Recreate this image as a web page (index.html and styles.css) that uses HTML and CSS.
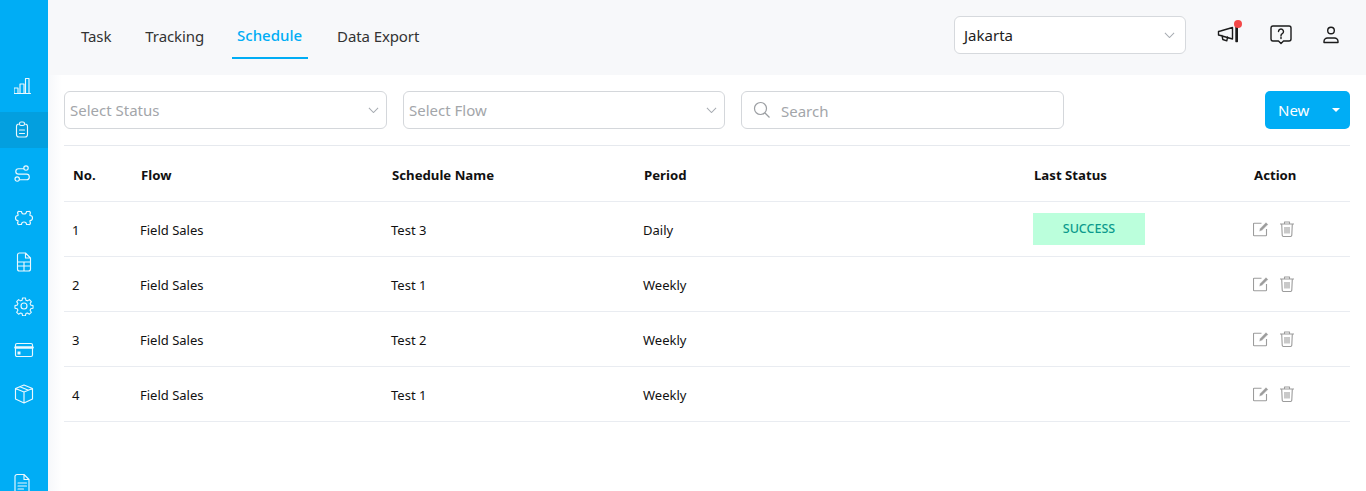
FILE: index.html
```html
<!DOCTYPE html>
<html lang="en">
<head>
<meta charset="utf-8">
<title>Schedule</title>
<link rel="stylesheet" href="styles.css">
</head>
<body>
<div class="app">
  <aside class="sidebar">
    <a class="side-item"><svg class="side-icon" viewBox="1 0 20 20"><path d="M0.500 17.500h17M1 17v-5h4v5M7 17V8h4v9M12.500 17V2.500h3.500V17"/></svg></a>
    <a class="side-item active"><svg class="side-icon" viewBox="0 0 20 20"><path d="M5.500 4H5a2.500 2.500 0 0 0-2.500 2.500v8A2.500 2.500 0 0 0 5 17h6a2.500 2.500 0 0 0 2.500-2.500v-8A2.500 2.500 0 0 0 11 4h-.5M5.500 3.500A1.500 1.500 0 0 1 7 2h2a1.500 1.500 0 0 1 1.500 1.500V4A1.500 1.500 0 0 1 9 5.500H7A1.500 1.500 0 0 1 5.500 4zM5.500 10h5M5.500 13.500h5"/></svg></a>
    <a class="side-item"><svg class="side-icon" viewBox="0 0 20 20"><circle cx="12" cy="4" r="2.200"/><circle cx="3.200" cy="15" r="2.200"/><path d="M9.500 4.700H4.500a2.700 2.700 0 0 0 0 5.400H12.500a2.800 2.800 0 0 1 0 5.600H6"/></svg></a>
    <a class="side-item"><svg class="side-icon" viewBox="0 0 20 20"><path d="M4 6a1.500 1.500 0 0 1 1.500-2.500H7.500a2 2 0 0 0 5 0H14.500a1.500 1.500 0 0 1 1.500 2.500V7.500a2.500 2.500 0 0 1 0 5V14a1.500 1.500 0 0 1-1.500 2.500H12.500a2 2 0 0 0-5 0H5.500A1.500 1.500 0 0 1 4 14V12.500a2.500 2.500 0 0 1 0-5z"/></svg></a>
    <a class="side-item"><svg class="side-icon" viewBox="0 0 20 20"><path d="M3.500 3a2 2 0 0 1 2-2H11.500l5 5V17a2 2 0 0 1-2 2h-9a2 2 0 0 1-2-2zM11.500 1V6h5M3.500 10h13M3.500 14h13M10 10v9"/></svg></a>
    <a class="side-item"><svg class="side-icon" viewBox="0 0 20 20"><circle cx="10" cy="10" r="3"/><path d="M8.500 1.500h3l.5 2.400 1.600.7 2.100-1.300 2 2.100-1.300 2.100.7 1.600 2.400.4v2.900l-2.400.5-.7 1.600 1.300 2.100-2 2-2.100-1.300-1.600.7-.5 2.400h-3l-.5-2.400-1.600-.7-2.100 1.300-2-2 1.300-2.100-.7-1.600-2.400-.5v-2.900l2.400-.4.7-1.600-1.300-2.100 2-2.100 2.100 1.300 1.600-.7z" transform="translate(.5 .5) scale(.95)"/></svg></a>
    <a class="side-item"><svg class="side-icon" viewBox="0 0 20 20"><rect x="1.500" y="3.500" width="17" height="13" rx="1.500"/><path class="thick" d="M1.500 7.500h17"/><rect class="solid" x="3.500" y="11.500" width="3" height="3"/></svg></a>
    <a class="side-item"><svg class="side-icon" viewBox="0 0 20 20"><path d="M10 1l8.500 3.500V15L10 19l-8.500-4V4.500zM1.500 4.500L10 8l8.500-3.500M10 8v11M6 2.700l8.500 3.500"/></svg></a>
    <a class="side-item last"><svg class="side-icon" viewBox="0 0 20 20"><path d="M1 3.500a2 2 0 0 1 2-2H10l5 5V18a2 2 0 0 1-2 2H3a2 2 0 0 1-2-2zM10 1.500V6.500h5M4 10h8.500M4 13h8.500M4 16h5.500"/></svg></a>
  </aside>
  <main class="main">
    <header class="topbar">
      <nav class="tabs">
        <a class="tab">Task</a>
        <a class="tab">Tracking</a>
        <a class="tab current">Schedule</a>
        <a class="tab">Data Export</a>
      </nav>
      <div class="top-right">
        <div class="city"><span>Jakarta</span><svg class="chevron" viewBox="0 0 12 7"><path d="M1 1l5 5 5-5"/></svg></div>
        <a class="top-icon bell">
          <svg viewBox="0 0 24 24"><path d="M1.500 8.500l2-.5 12-3.500v11.500l-12-3.500-2-.5zM5 12.500l.8 4 4 1.300.7-3.800M19 2.500h1.300V18.500H19z"/></svg>
          <span class="dot"></span>
        </a>
        <a class="top-icon help"><svg viewBox="0 0 24 24"><path d="M4 3h16a2 2 0 0 1 2 2v11a2 2 0 0 1-2 2h-5.500L12 20.500 9.500 18H4a2 2 0 0 1-2-2V5a2 2 0 0 1 2-2z"/><path d="M9.500 8.500a2.500 2.500 0 1 1 3.800 2.200c-.9.500-1.300 1-1.300 2M12 14.200v1.300"/></svg></a>
        <a class="top-icon"><svg viewBox="0 0 24 24"><circle cx="12" cy="7.500" r="3.300"/><path d="M5 19.500v-1a3.500 3.500 0 0 1 3.500-3.500h7a3.500 3.500 0 0 1 3.500 3.500v1z"/></svg></a>
      </div>
    </header>
    <section class="content">
      <div class="filters">
        <div class="select"><span>Select Status</span><svg class="chevron" viewBox="0 0 12 7"><path d="M1 1l5 5 5-5"/></svg></div>
        <div class="select"><span>Select Flow</span><svg class="chevron" viewBox="0 0 12 7"><path d="M1 1l5 5 5-5"/></svg></div>
        <div class="search">
          <svg class="search-icon" viewBox="0 0 18 18"><circle cx="7.500" cy="7.500" r="6"/><path d="M12 12l4.500 4.500"/></svg>
          <span class="search-text">Search</span>
        </div>
        <button class="new-btn"><span>New</span><i class="caret"></i></button>
      </div>
      <table class="grid">
        <colgroup>
          <col class="c-no"><col class="c-flow"><col class="c-name"><col class="c-period"><col class="c-status"><col class="c-action">
        </colgroup>
        <thead>
          <tr><th>No.</th><th>Flow</th><th>Schedule Name</th><th>Period</th><th>Last Status</th><th>Action</th></tr>
        </thead>
        <tbody>
          <tr><td>1</td><td>Field Sales</td><td>Test 3</td><td>Daily</td><td><span class="badge">SUCCESS</span></td>
            <td><div class="actions"><svg viewBox="0 0 16 16"><path d="M13.500 8v6a.7.700 0 0 1-.7.700H1.200a.7.700 0 0 1-.7-.7V3a.7.700 0 0 1 .7-.7h7.300"/><path class="fill" d="M6 10.500l.7-2.800L13 1.200l2.200 2.200-6.400 6.400z"/></svg><svg viewBox="0 0 16 16"><path d="M1 3h14M5.500 3V1h5v2M2.700 3l.5 11a1.500 1.500 0 0 0 1.500 1.500h6.600a1.500 1.500 0 0 0 1.500-1.500l.5-11M6 6v6.500M8 6v6.500M10 6v6.500"/></svg></div></td></tr>
          <tr><td>2</td><td>Field Sales</td><td>Test 1</td><td>Weekly</td><td></td>
            <td><div class="actions"><svg viewBox="0 0 16 16"><path d="M13.500 8v6a.7.700 0 0 1-.7.700H1.200a.7.700 0 0 1-.7-.7V3a.7.700 0 0 1 .7-.7h7.300"/><path class="fill" d="M6 10.500l.7-2.800L13 1.200l2.200 2.200-6.400 6.400z"/></svg><svg viewBox="0 0 16 16"><path d="M1 3h14M5.500 3V1h5v2M2.700 3l.5 11a1.500 1.500 0 0 0 1.500 1.500h6.600a1.500 1.500 0 0 0 1.500-1.500l.5-11M6 6v6.500M8 6v6.500M10 6v6.500"/></svg></div></td></tr>
          <tr><td>3</td><td>Field Sales</td><td>Test 2</td><td>Weekly</td><td></td>
            <td><div class="actions"><svg viewBox="0 0 16 16"><path d="M13.500 8v6a.7.700 0 0 1-.7.700H1.200a.7.700 0 0 1-.7-.7V3a.7.700 0 0 1 .7-.7h7.300"/><path class="fill" d="M6 10.500l.7-2.800L13 1.200l2.200 2.200-6.400 6.400z"/></svg><svg viewBox="0 0 16 16"><path d="M1 3h14M5.500 3V1h5v2M2.700 3l.5 11a1.500 1.500 0 0 0 1.500 1.500h6.600a1.500 1.500 0 0 0 1.500-1.500l.5-11M6 6v6.500M8 6v6.500M10 6v6.500"/></svg></div></td></tr>
          <tr><td>4</td><td>Field Sales</td><td>Test 1</td><td>Weekly</td><td></td>
            <td><div class="actions"><svg viewBox="0 0 16 16"><path d="M13.500 8v6a.7.700 0 0 1-.7.700H1.200a.7.700 0 0 1-.7-.7V3a.7.700 0 0 1 .7-.7h7.300"/><path class="fill" d="M6 10.500l.7-2.800L13 1.200l2.200 2.200-6.400 6.400z"/></svg><svg viewBox="0 0 16 16"><path d="M1 3h14M5.500 3V1h5v2M2.700 3l.5 11a1.500 1.500 0 0 0 1.500 1.500h6.600a1.500 1.500 0 0 0 1.500-1.500l.5-11M6 6v6.500M8 6v6.500M10 6v6.500"/></svg></div></td></tr>
        </tbody>
      </table>
    </section>
  </main>
</div>
</body>
</html>
```
FILE: styles.css
```css
* { box-sizing: border-box; }
html, body { margin: 0; height: 100%; overflow: hidden; }
body { font-family: "Noto Sans", "Open Sans", sans-serif; color: #111; background: #fff; }
.app { display: flex; height: 491px; overflow: hidden; }

.sidebar { width: 48px; flex: none; background: #00adf5; display: flex; flex-direction: column; gap: 8px; padding-top: 68px; overflow: hidden; }
.side-item { height: 36px; flex: none; display: flex; align-items: center; justify-content: center; }
.side-item.active { background: #039fdf; }
.side-item.last { margin-top: 45px; justify-content: flex-start; padding-left: 14px; }
.side-icon { width: 20px; height: 20px; flex: none; fill: none; stroke: #fff; stroke-width: 1.150; stroke-linejoin: round; stroke-linecap: round; opacity: .92; }
.side-icon .thick { stroke-width: 2.500; }
.side-icon .solid { fill: #fff; stroke: none; }

.main { flex: 1; min-width: 0; display: flex; flex-direction: column; }
.topbar { height: 75px; flex: none; background: #f7f8fa; display: flex; align-items: flex-start; justify-content: space-between; padding-left: 28px; }
.tabs { display: flex; gap: 24px; margin-top: 13px; }
.tab { height: 46px; padding: 0 5px; font-size: 15px; line-height: 47px; color: #333; letter-spacing: -.1px; white-space: nowrap; }
.tab.current { margin-left: -1px; padding-right: 6px; color: #00adf5; font-weight: 500; letter-spacing: 0; line-height: 45px; border-bottom: 2px solid #00adf5; }

.top-right { display: flex; align-items: flex-start; margin-top: 16px; padding-right: 23px; }
.city { width: 232px; height: 38px; margin-right: 31px; padding: 0 10px 0 9px; background: #fff; border: 1px solid #d6d9dd; border-radius: 6px; display: flex; align-items: center; justify-content: space-between; font-size: 15px; color: #222; }
.chevron { width: 11px; height: 6.500px; fill: none; stroke: #a6abb1; stroke-width: 1.100; }
.top-icon { position: relative; display: block; width: 24px; height: 24px; margin-right: 28px; margin-top: 7px; }
.top-icon.help { margin-right: 26px; }
.top-icon:last-child { margin-right: 0; }
.top-icon svg { display: block; width: 24px; height: 24px; fill: none; stroke: #1b1b1b; stroke-width: 1.400; stroke-linejoin: round; stroke-linecap: round; }
.dot { position: absolute; top: -3px; right: -1px; width: 8px; height: 8px; border-radius: 50%; background: #f44848; }

.content { flex: 1; padding: 16px 16px 0; background: linear-gradient(90deg, #f6f8fb 0, #fff 14px); }
.filters { display: flex; align-items: flex-start; height: 54px; }
.select, .search { height: 38px; background: #fff; border: 1px solid #d4d7db; border-radius: 6px; display: flex; align-items: center; font-size: 15px; color: #a3a6aa; }
.select { width: 323px; justify-content: space-between; padding: 0 7px 0 5px; margin-right: 16px; }
.select + .select { width: 322px; margin-right: 16px; }
.search { width: 323px; padding-left: 11px; gap: 10px; }
.search-text { padding-top: 2px; }
.search-icon { width: 18px; height: 18px; fill: none; stroke: #9b9ea2; stroke-width: 1.200; }
.new-btn { margin-left: auto; width: 85px; height: 38px; background: #00adf5; border: 0; border-radius: 5px; color: #fff; font: 400 15px "Noto Sans", sans-serif; display: flex; align-items: center; padding: 0 0 0 13px; position: relative; }
.caret { position: absolute; right: 10px; top: 17px; width: 0; height: 0; border-left: 4px solid transparent; border-right: 4px solid transparent; border-top: 4px solid #fff; }

.grid { width: 1286px; table-layout: fixed; border-collapse: collapse; border-top: 1px solid #e6e9ee; }
.c-no { width: 68px; }
.c-flow { width: 251px; }
.c-name { width: 252px; }
.c-period { width: 390px; }
.c-status { width: 220px; }
.grid th, .grid td { padding: 2px 0 0 8px; text-align: left; border-bottom: 1px solid #e9ecf1; vertical-align: middle; }
.grid th { height: 56px; padding-left: 9px; font-size: 13.200px; font-weight: 700; color: #111; }
.grid td { height: 55px; font-size: 13px; color: #111; }
.badge { display: block; width: 112px; height: 32px; line-height: 32px; text-align: center; background: #bbffdc; color: #0b9a8c; font-size: 12.500px; font-weight: 500; margin-bottom: 2px; }
.actions { display: flex; gap: 10px; padding-bottom: 2px; }
.actions svg { width: 16px; height: 16px; fill: none; stroke: #9c9c9c; stroke-width: 1.100; stroke-linejoin: round; }
.actions .fill { fill: #9c9c9c; stroke: #fff; stroke-width: .6; }
```
